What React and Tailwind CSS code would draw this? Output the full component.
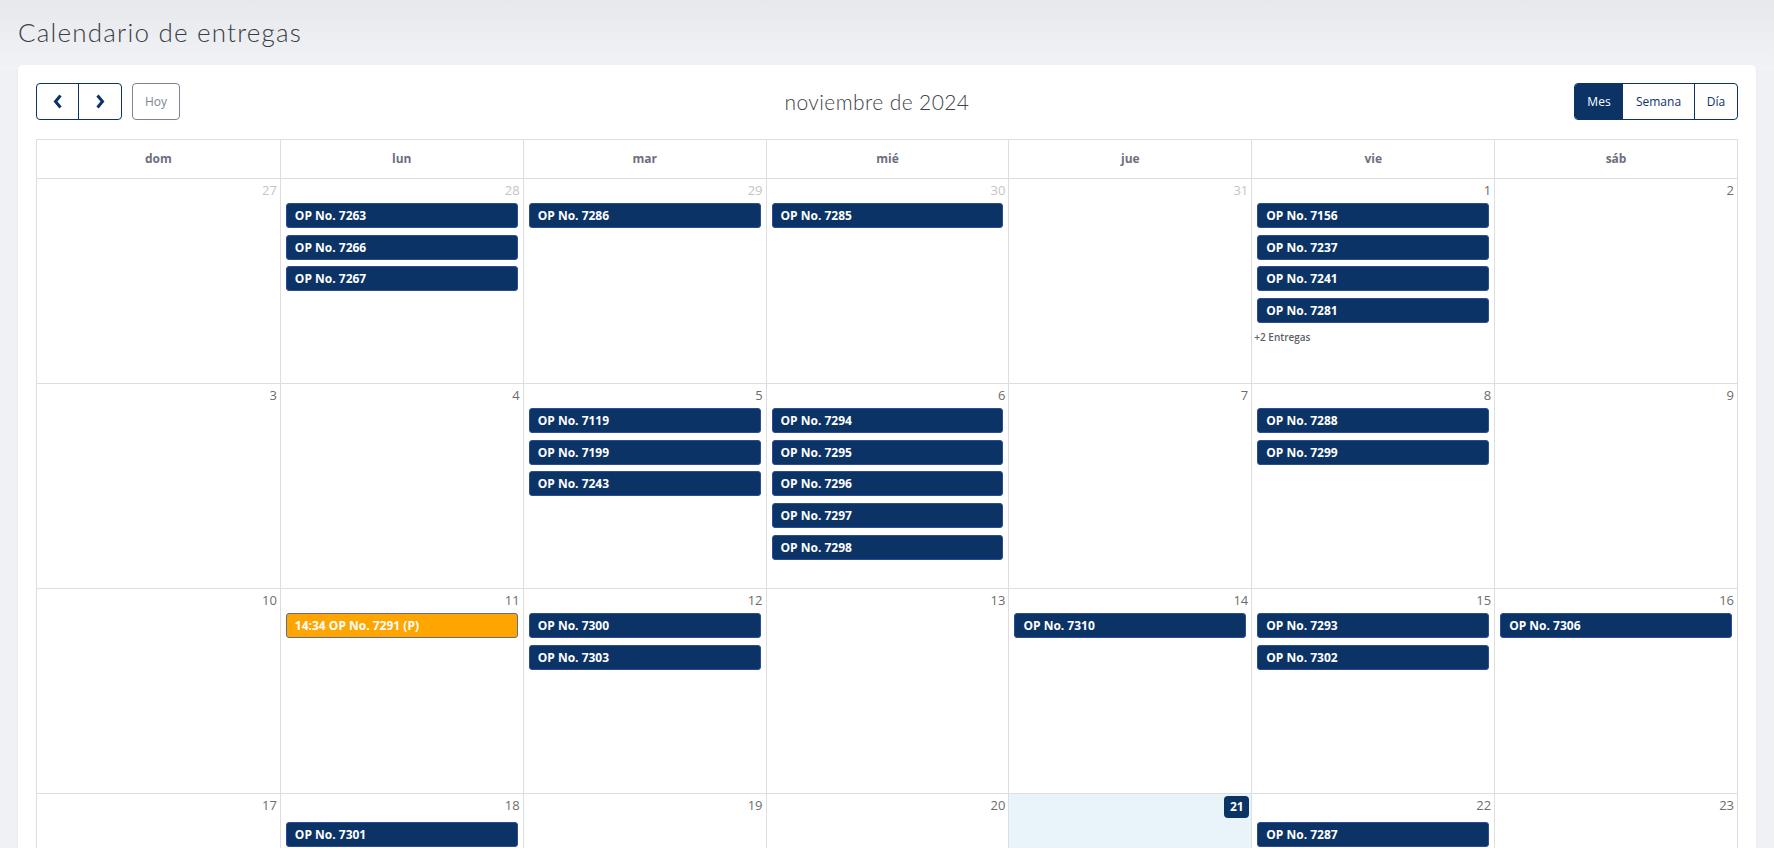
import React from 'react';

const days = ['dom', 'lun', 'mar', 'mié', 'jue', 'vie', 'sáb'];

const weeks = [
  {
    top: 'h-[24px]',
    cells: [
      { n: 27, other: true },
      { n: 28, other: true, ev: ['OP No. 7263', 'OP No. 7266', 'OP No. 7267'] },
      { n: 29, other: true, ev: ['OP No. 7286'] },
      { n: 30, other: true, ev: ['OP No. 7285'] },
      { n: 31, other: true },
      { n: 1, ev: ['OP No. 7156', 'OP No. 7237', 'OP No. 7241', 'OP No. 7281'], more: '+2 Entregas' },
      { n: 2 },
    ],
  },
  {
    top: 'h-[24px]',
    cells: [
      { n: 3 },
      { n: 4 },
      { n: 5, ev: ['OP No. 7119', 'OP No. 7199', 'OP No. 7243'] },
      { n: 6, ev: ['OP No. 7294', 'OP No. 7295', 'OP No. 7296', 'OP No. 7297', 'OP No. 7298'] },
      { n: 7 },
      { n: 8, ev: ['OP No. 7288', 'OP No. 7299'] },
      { n: 9 },
    ],
  },
  {
    top: 'h-[24px]',
    cells: [
      { n: 10 },
      { n: 11, pending: ['14:34 OP No. 7291 (P)'] },
      { n: 12, ev: ['OP No. 7300', 'OP No. 7303'] },
      { n: 13 },
      { n: 14, ev: ['OP No. 7310'] },
      { n: 15, ev: ['OP No. 7293', 'OP No. 7302'] },
      { n: 16, ev: ['OP No. 7306'] },
    ],
  },
  {
    top: 'h-[28px]',
    cells: [
      { n: 17 },
      { n: 18, ev: ['OP No. 7301'] },
      { n: 19 },
      { n: 20 },
      { n: 21, today: true },
      { n: 22, ev: ['OP No. 7287'] },
      { n: 23 },
    ],
  },
];

function Chevron({ left }) {
  return (
    <svg width="10" height="15" viewBox="0 0 10 15" fill="none">
      <path
        d={left ? 'M7.5 1.5 L2.5 7.5 L7.5 13.5' : 'M2.5 1.5 L7.5 7.5 L2.5 13.5'}
        stroke="#0b3366"
        strokeWidth="3"
      />
    </svg>
  );
}

function Event({ label, pending }) {
  return (
    <div
      className={
        pending
          ? 'h-[25px] rounded-[3px] border border-[#6a6a88] bg-[#ffa500] pl-[8px] text-[12px] font-bold leading-[23px] text-white'
          : 'h-[25px] rounded-[3px] border border-[#2d4c98] bg-[#0b3366] pl-[8px] text-[12px] font-bold leading-[23px] text-white'
      }
    >
      {label}
    </div>
  );
}

function DayCell({ cell, first, top }) {
  return (
    <div className={`flex flex-col ${first ? '' : 'border-l border-[#dedede]'} ${cell.today ? 'bg-[#e8f4fa]' : ''}`}>
      <div className={`flex justify-end ${top}`}>
        {cell.today ? (
          <span className="mt-[2px] mr-[2px] flex h-[22px] w-[25px] items-center justify-center rounded-[4px] bg-[#0b3366] text-[12px] font-bold text-white">
            {cell.n}
          </span>
        ) : (
          <span
            className={`pt-[1px] pr-[3px] text-[13px] leading-[20px] ${cell.other ? 'text-[#c4c4c4]' : 'text-[#6d6d6d]'}`}
          >
            {cell.n}
          </span>
        )}
      </div>
      <div className="mx-[5px] flex flex-col gap-[6.7px]">
        {(cell.pending || []).map((l) => (
          <Event key={l} label={l} pending />
        ))}
        {(cell.ev || []).map((l) => (
          <Event key={l} label={l} />
        ))}
      </div>
      {cell.more && (
        <div className="mt-[7px] pl-[2px] text-[10px] font-semibold leading-[14px] text-[#5b5f6b]">{cell.more}</div>
      )}
    </div>
  );
}

export default function App() {
  return (
    <div className="h-screen overflow-hidden bg-[#f0f1f5] bg-gradient-to-b from-[#e7e8ec] to-[#f2f3f7] bg-[length:100%_70px] bg-no-repeat font-['Open_Sans',sans-serif]">
      <div className="flex h-[65px] items-center px-[18px]">
        <h1 className="font-['Lato',sans-serif] text-[26px] font-light tracking-[1.2px] text-[#393c45]">
          Calendario de entregas
        </h1>
      </div>

      <div className="mx-[18px] rounded-[5px] bg-white p-[18px] shadow-[0_1px_3px_rgba(0,0,0,0.04)]">
        <div className="flex h-[37px] items-center justify-between">
          <div className="flex h-full items-center">
            <div className="flex h-full overflow-hidden rounded-[4px] border border-[#0b3366]">
              <button className="flex w-[42px] items-center justify-center border-r border-[#0b3366]">
                <Chevron left />
              </button>
              <button className="flex w-[42px] items-center justify-center">
                <Chevron />
              </button>
            </div>
            <button className="ml-[10px] h-full w-[48px] rounded-[4px] border border-[#7c8595] text-[12px] text-[#7c8595]">
              Hoy
            </button>
          </div>

          <h2 className="font-['Lato',sans-serif] text-[21px] font-light tracking-[0.4px] text-[#3f424a]">
            noviembre de 2024
          </h2>

          <div className="flex h-full overflow-hidden rounded-[4px] border border-[#0b3366] text-[12px]">
            <button className="w-[48px] bg-[#0b3366] text-white">Mes</button>
            <button className="w-[71px] text-[#0b3366]">Semana</button>
            <button className="w-[43px] border-l border-[#0b3366] text-[#0b3366]">Día</button>
          </div>
        </div>

        <div className="mt-[19px] border border-[#dedede]">
          <div className="grid h-[38px] grid-cols-7">
            {days.map((d, i) => (
              <div
                key={d}
                className={`flex items-center justify-center text-[12px] font-bold text-[#6c6f7e] ${i ? 'border-l border-[#dedede]' : ''}`}
              >
                {d}
              </div>
            ))}
          </div>
          {weeks.map((w, wi) => (
            <div key={wi} className="grid h-[205px] grid-cols-7 border-t border-[#dedede]">
              {w.cells.map((c, i) => (
                <DayCell key={i} cell={c} first={i === 0} top={w.top} />
              ))}
            </div>
          ))}
        </div>
      </div>
    </div>
  );
}
